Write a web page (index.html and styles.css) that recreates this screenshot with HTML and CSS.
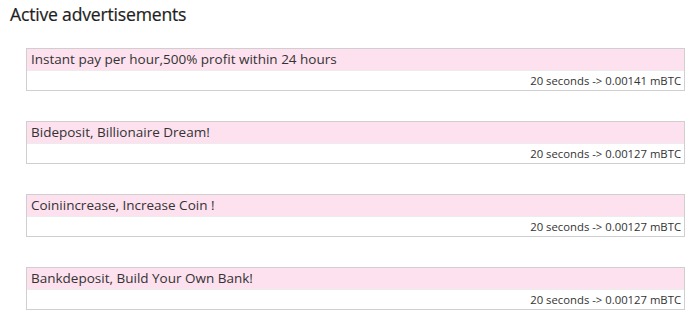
FILE: index.html
```html
<!DOCTYPE html>
<html>
<head>
<meta charset="utf-8">
<link rel="stylesheet" href="styles.css">
</head>
<body>
<h2 class="title">Active advertisements</h2>
<div class="list">
  <div class="ad">
    <div class="ad-title">Instant pay per hour,500% profit within 24 hours</div>
    <div class="ad-info">20 seconds -&gt; 0.00141 mBTC</div>
  </div>
  <div class="ad">
    <div class="ad-title">Bideposit, Billionaire Dream!</div>
    <div class="ad-info">20 seconds -&gt; 0.00127 mBTC</div>
  </div>
  <div class="ad">
    <div class="ad-title">Coiniincrease, Increase Coin !</div>
    <div class="ad-info">20 seconds -&gt; 0.00127 mBTC</div>
  </div>
  <div class="ad">
    <div class="ad-title">Bankdeposit, Build Your Own Bank!</div>
    <div class="ad-info">20 seconds -&gt; 0.00127 mBTC</div>
  </div>
</div>
</body>
</html>
```

FILE: styles.css
```css
html, body {
  margin: 0;
  padding: 0;
  background: #fff;
}
body {
  font-family: "Open Sans", "Noto Sans", sans-serif;
  color: #333;
}
.title {
  margin: 0;
  padding: 2px 0 0 10px;
  font-size: 17.6px;
  font-weight: normal;
  line-height: 24px;
  color: #1e1e1e;
  letter-spacing: -0.2px;
  -webkit-text-stroke: 0.2px #1e1e1e;
}
.list {
  display: flex;
  flex-direction: column;
  gap: 30px;
  padding: 22px 12px 0 26px;
}
.ad {
  border: 1px solid #cfcfcf;
  height: 41px;
  display: flex;
  flex-direction: column;
}
.ad-title {
  background: #fde1ee;
  height: 21px;
  line-height: 21px;
  padding-left: 4px;
  font-size: 13.5px;
  color: #333;
  border-bottom: 1px solid #ececec;
}
.ad-info {
  text-align: right;
  font-size: 11.3px;
  line-height: 19px;
  padding-right: 3px;
  color: #333;
}
```
